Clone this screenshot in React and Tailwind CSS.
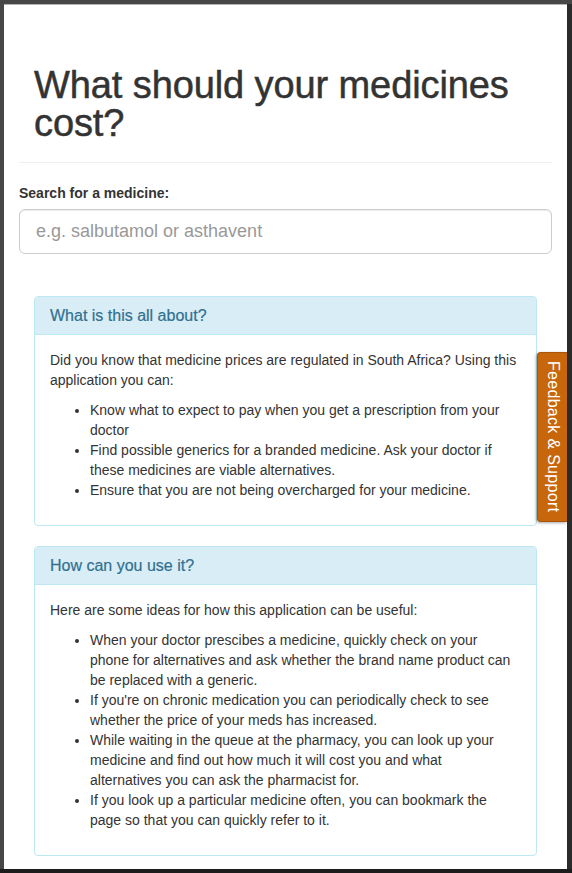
export default function App() {
    // each item is split into the lines seen in the reference
    const aboutItems = [
        ["Know what to expect to pay when you get a prescription from your", "doctor"],
        ["Find possible generics for a branded medicine. Ask your doctor if", "these medicines are viable alternatives."],
        ["Ensure that you are not being overcharged for your medicine."],
    ];

    const useItems = [
        [
            "When your doctor prescibes a medicine, quickly check on your",
            "phone for alternatives and ask whether the brand name product can",
            "be replaced with a generic.",
        ],
        [
            "If you're on chronic medication you can periodically check to see",
            "whether the price of your meds has increased.",
        ],
        [
            "While waiting in the queue at the pharmacy, you can look up your",
            "medicine and find out how much it will cost you and what",
            "alternatives you can ask the pharmacist for.",
        ],
        [
            "If you look up a particular medicine often, you can bookmark the",
            "page so that you can quickly refer to it.",
        ],
    ];

    const panelClass = "mx-[15px] rounded-[4px] border border-[#bce8f1] bg-white";
    const headingClass =
        "rounded-t-[3px] border-b border-[#bce8f1] bg-[#d9edf7] px-[15px] py-[10px] text-[16px] leading-[17px] text-[#31708f] [-webkit-text-stroke:0.2px_#31708f]";

    const renderItems = (items) =>
        items.map((lines, idx) => (
            <li key={idx}>
                {lines.map((line, i) => (
                    <span key={i} className="block whitespace-nowrap">
                        {line}
                    </span>
                ))}
            </li>
        ));

    return (
        <div className="relative h-[873px] w-[572px] overflow-hidden bg-[#1c1c1c] font-['Liberation_Sans',Arial,sans-serif] text-[14px] leading-[20px] text-[#333]">
            <div className="h-[4px] bg-[#474747]" />
            <div className="flex h-[865px]">
                <div className="w-[4px] bg-[#474747]" />
                <div className="w-[563px] overflow-hidden border-t border-[#b4b4b4] bg-white px-[15px]">
                    {/* PAGE HEADER */}
                    <div className="border-b border-[#eee] pt-[61px] pb-[20px]">
                        <h1 className="px-[15px] text-[38px] leading-[38px] font-medium tracking-[-0.1px] text-[#333] [-webkit-text-stroke:0.5px_#333]">
                            What should your medicines
                            <br />
                            cost?
                        </h1>
                    </div>

                    {/* SEARCH */}
                    <div className="mt-[20px]">
                        <label className="block font-bold">Search for a medicine:</label>
                        <input
                            type="text"
                            placeholder="e.g. salbutamol or asthavent"
                            className="mt-[6px] block h-[45px] w-full rounded-[6px] border border-[#ccc] px-[16px] text-[18px] text-[#555] shadow-[inset_0_1px_1px_rgba(0,0,0,0.075)] outline-none placeholder:text-[#999]"
                        />
                    </div>

                    {/* ABOUT */}
                    <div className={`${panelClass} mt-[42px]`}>
                        <div className={headingClass}>What is this all about?</div>
                        <div className="p-[15px]">
                            <p className="mb-[10px]">
                                <span className="block whitespace-nowrap">
                                    Did you know that medicine prices are regulated in South Africa? Using this
                                </span>
                                <span className="block">application you can:</span>
                            </p>
                            <ul className="mb-[10px] list-disc pl-[40px]">{renderItems(aboutItems)}</ul>
                        </div>
                    </div>

                    {/* HOW TO USE */}
                    <div className={`${panelClass} mt-[20px]`}>
                        <div className={headingClass}>How can you use it?</div>
                        <div className="p-[15px]">
                            <p className="mb-[10px]">
                                Here are some ideas for how this application can be useful:
                            </p>
                            <ul className="mb-[10px] list-disc pl-[40px]">{renderItems(useItems)}</ul>
                        </div>
                    </div>
                </div>
                <div className="w-[5px] bg-[#2b2b2b]" />
            </div>

            {/* FEEDBACK TAB */}
            <div className="absolute top-[352px] left-[537px] flex h-[170px] w-[30px] items-center justify-center rounded-l-[4px] border border-r-0 border-[#a9560a] bg-[#c7660b] shadow-[-1px_1px_3px_rgba(0,0,0,0.35)]">
                <span className="text-[16px] leading-[18px] tracking-[0.3px] whitespace-nowrap text-white [writing-mode:vertical-rl]">
                    Feedback &amp; Support
                </span>
            </div>
        </div>
    );
}
